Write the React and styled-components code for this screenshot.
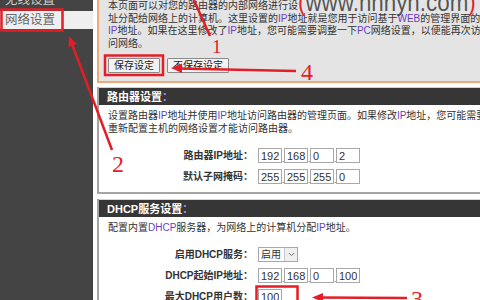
import React from 'react';
import styled, { createGlobalStyle } from 'styled-components';
import { ChevronDown } from 'lucide-react';

const FONT = '"Liberation Sans", "Noto Sans CJK SC", sans-serif';
const RED = '#e41e26';

const Global = createGlobalStyle`
  html, body { margin: 0; padding: 0; background: #fff; }
  body { width: 480px; height: 300px; overflow: hidden; font-family: ${FONT}; }
`;

const Page = styled.div`
  position: relative;
  width: 480px;
  height: 300px;
  overflow: hidden;
  display: flex;
  background: #fff;
`;

const Sidebar = styled.nav`
  width: 93px;
  flex: none;
  background: #444;
  display: flex;
  flex-direction: column;
  gap: 2px;
`;

const NavItem = styled.div`
  height: 18px;
  line-height: 18px;
  padding-left: 5px;
  font-size: 12.5px;
  white-space: nowrap;
  color: ${(p) => (p.$active ? '#666' : '#cfcfcf')};
  background: ${(p) => (p.$active ? '#efefef' : 'transparent')};
  &:first-child { margin-top: -9px; }
`;

const Content = styled.main`
  flex: 1;
  min-width: 0;
  margin-left: 4px;
  display: flex;
  flex-direction: column;
`;

const Intro = styled.section`
  background: #e4e4e4;
  border-left: 2px solid #f0a878;
  border-bottom: 2px solid #f0a878;
  padding: 0 0 8px 9px;
`;

const Text = styled.p`
  margin: 0;
  font-size: 10px;
  line-height: ${(p) => p.$lh || 13}px;
  color: #333;
  white-space: nowrap;
`;

const Hi = styled.span`
  color: #6a3ec4;
`;

const ButtonRow = styled.div`
  display: flex;
  gap: 7px;
  margin-top: 8px;
`;

const Button = styled.button`
  height: 15px;
  padding: 0 5px;
  box-sizing: border-box;
  font: 10px/13px ${FONT};
  color: #222;
  background: #f2f2f2;
  border: 1px solid #8a8a8a;
  border-radius: 1px;
`;

const Section = styled.section`
  margin-top: ${(p) => p.$gap}px;
  border-left: 2px solid #a5a5a5;
  border-bottom: 2px solid #a5a5a5;
  background: #fff;
`;

const SectionHeader = styled.h2`
  margin: 0;
  height: 18px;
  line-height: 18px;
  padding-left: 8px;
  background: #363636;
  border-top: 1px solid #d4d4d4;
  box-sizing: border-box;
  color: #fff;
  font-size: 11px;
  font-weight: bold;
  white-space: nowrap;
`;

const Colon = styled.span`
  color: #9a92ff;
`;

const SectionBody = styled.div`
  padding: 4px 0 8px 9px;
`;

const Form = styled.div`
  margin-top: 13px;
  display: grid;
  grid-template-columns: 145px auto;
  column-gap: 5px;
  row-gap: 6px;
  align-items: center;
`;

const Label = styled.div`
  text-align: right;
  font-size: 10px;
  font-weight: bold;
  color: #333;
  white-space: nowrap;
  line-height: 15px;
`;

const Field = styled.div`
  display: flex;
  align-items: flex-end;
  height: 15px;
`;

const IpInput = styled.input`
  width: 24px;
  height: 15px;
  box-sizing: border-box;
  padding: 0 2px;
  border: 1px solid #a8a8a8;
  font: 11px/13px ${FONT};
  color: #333;
  background: #fff;
  outline: none;
  margin: 0;
`;

const Dot = styled.span`
  width: 2px;
  font-size: 9px;
  line-height: 8px;
  text-align: center;
  color: #555;
`;

const Select = styled.div`
  width: 40px;
  height: 15px;
  box-sizing: border-box;
  border: 1px solid #a8a8a8;
  display: flex;
  font-size: 10px;
  line-height: 13px;
  color: #333;
  background: #fff;
`;

const SelectText = styled.span`
  flex: 1;
  padding-left: 2px;
`;

const SelectArrow = styled.span`
  width: 12px;
  border-left: 1px solid #c8c8c8;
  background: #efefef;
  display: flex;
  align-items: center;
  justify-content: center;
  color: #666;
`;

const Watermark = styled.div`
  position: absolute;
  left: 298px;
  top: -11px;
  font: 26px/26px ${FONT};
  color: rgba(58, 58, 58, 0.85);
  white-space: nowrap;
  transform: scaleX(0.86);
  transform-origin: left top;
`;

const Paren = styled.span`
  color: ${RED};
`;

const Overlay = styled.svg`
  position: absolute;
  left: 0;
  top: 0;
  pointer-events: none;
`;

function Ip({ parts }) {
  return (
    <Field>
      {parts.map((v, i) => (
        <React.Fragment key={i}>
          {i > 0 && <Dot>.</Dot>}
          <IpInput readOnly value={v} />
        </React.Fragment>
      ))}
    </Field>
  );
}

export default function App() {
  return (
    <>
      <Global />
      <Page>
        <Sidebar>
          <NavItem>无线设置</NavItem>
          <NavItem $active>网络设置</NavItem>
        </Sidebar>
        <Content>
          <Intro>
            <Text $lh={12.5}>本页面可以对您的路由器的内部网络进行设</Text>
            <Text $lh={12.5}>
              址分配给网络上的计算机。这里设置的<Hi>IP</Hi>地址就是您用于访问基于<Hi>WEB</Hi>的管理界面的
            </Text>
            <Text $lh={12.5}>
              <Hi>IP</Hi>地址。如果在这里修改了<Hi>IP</Hi>地址，您可能需要调整一下<Hi>PC</Hi>网络设置，以便能再次访
            </Text>
            <Text $lh={12.5}>问网络。</Text>
            <ButtonRow>
              <Button>保存设定</Button>
              <Button>不保存设定</Button>
            </ButtonRow>
          </Intro>

          <Section $gap={4}>
            <SectionHeader>
              路由器设置<Colon>：</Colon>
            </SectionHeader>
            <SectionBody>
              <Text>
                设置路由器<Hi>IP</Hi>地址并使用<Hi>IP</Hi>地址访问路由器的管理页面。如果修改<Hi>IP</Hi>地址，您可能需要
              </Text>
              <Text>重新配置主机的网络设置才能访问路由器。</Text>
              <Form>
                <Label>路由器IP地址：</Label>
                <Ip parts={['192', '168', '0', '2']} />
                <Label>默认子网掩码：</Label>
                <Ip parts={['255', '255', '255', '0']} />
              </Form>
            </SectionBody>
          </Section>

          <Section $gap={5}>
            <SectionHeader>
              DHCP服务设置<Colon>：</Colon>
            </SectionHeader>
            <SectionBody>
              <Text>
                配置内置<Hi>DHCP</Hi>服务器，为网络上的计算机分配<Hi>IP</Hi>地址。
              </Text>
              <Form>
                <Label>启用DHCP服务：</Label>
                <Field>
                  <Select>
                    <SelectText>启用</SelectText>
                    <SelectArrow>
                      <ChevronDown size={9} strokeWidth={2.5} />
                    </SelectArrow>
                  </Select>
                </Field>
                <Label>DHCP起始IP地址：</Label>
                <Ip parts={['192', '168', '0', '100']} />
                <Label>最大DHCP用户数：</Label>
                <Field>
                  <IpInput readOnly value="100" />
                </Field>
              </Form>
            </SectionBody>
          </Section>
        </Content>

        <Watermark>
          <Paren>(</Paren>www.nnnyn.com<Paren>)</Paren>
        </Watermark>

        <Overlay width="480" height="300" viewBox="0 0 480 300">
          <g fill="none" stroke={RED} strokeWidth="2.5">
            <rect x="1.5" y="9.5" width="61" height="21" />
            <rect x="105" y="55.5" width="58" height="19.5" />
            <rect x="256.5" y="286.5" width="41" height="22" />
            <line x1="193" y1="-2" x2="210" y2="36" />
            <line x1="296" y1="71" x2="178" y2="68.5" />
            <line x1="112" y1="150" x2="72" y2="44" />
            <line x1="407" y1="298" x2="319" y2="297.5" />
          </g>
          <g fill={RED}>
            <polygon points="171,68 182,63.5 182,73" />
            <polygon points="69,36 76.5,44 68.5,47" />
            <polygon points="312,297.5 323,293 323,302" />
          </g>
          <g fill={RED} fontFamily='"Liberation Serif", serif'>
            <text x="212" y="53" fontSize="19">1</text>
            <text x="112" y="172" fontSize="24">2</text>
            <text x="411" y="307" fontSize="24">3</text>
            <text x="301" y="80" fontSize="24">4</text>
          </g>
        </Overlay>
      </Page>
    </>
  );
}
